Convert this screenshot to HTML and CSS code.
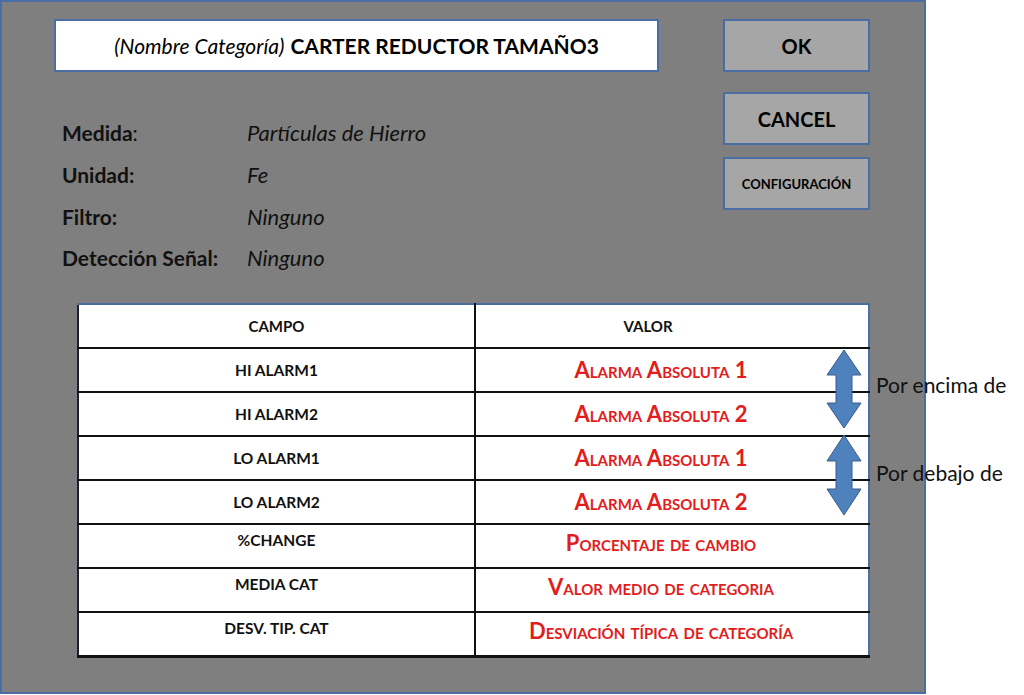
FILE: index.html
```html
<!DOCTYPE html>
<html lang="es">
<head>
<meta charset="UTF-8">
<meta name="viewport" content="width=device-width, initial-scale=1.0">
<title>Categoría - Alarmas</title>
<link rel="stylesheet" href="styles.css">
</head>
<body>

<div class="panel">
    <div class="top">
        <div class="info">
            <div class="title-box">
                <span class="title-label">(Nombre Categoría)</span>
                <span class="title-name">CARTER REDUCTOR TAMAÑO3</span>
            </div>

            <div class="fields">
                <div class="field-label">Medida<span class="thin">:</span></div>
                <div class="field-value">Partículas de Hierro</div>
                <div class="field-label">Unidad:</div>
                <div class="field-value">Fe</div>
                <div class="field-label">Filtro:</div>
                <div class="field-value">Ninguno</div>
                <div class="field-label">Detección Señal:</div>
                <div class="field-value">Ninguno</div>
            </div>
        </div>

        <div class="buttons">
            <button class="btn btn-ok">OK</button>
            <button class="btn btn-cancel">CANCEL</button>
            <button class="btn btn-config">CONFIGURACIÓN</button>
        </div>
    </div>

    <div class="table-section">
        <div class="table-wrap">
            <table class="alarms">
                <tr class="head">
                    <th>CAMPO</th>
                    <th>VALOR</th>
                </tr>
                <tr>
                    <td class="campo">HI ALARM1</td>
                    <td class="valor">Alarma Absoluta 1</td>
                </tr>
                <tr>
                    <td class="campo">HI ALARM2</td>
                    <td class="valor">Alarma Absoluta 2</td>
                </tr>
                <tr>
                    <td class="campo">LO ALARM1</td>
                    <td class="valor">Alarma Absoluta 1</td>
                </tr>
                <tr>
                    <td class="campo">LO ALARM2</td>
                    <td class="valor">Alarma Absoluta 2</td>
                </tr>
                <tr class="raised">
                    <td class="campo">%CHANGE</td>
                    <td class="valor">Porcentaje de cambio</td>
                </tr>
                <tr class="raised">
                    <td class="campo">MEDIA CAT</td>
                    <td class="valor">Valor medio de categoria</td>
                </tr>
                <tr class="raised">
                    <td class="campo">DESV. TIP. CAT</td>
                    <td class="valor">Desviación típica de categoría</td>
                </tr>
            </table>

            <svg class="arrow arrow-hi" viewBox="0 0 36 80" width="36" height="80">
                <polygon points="18,1 35,26 26,26 26,54 35,54 18,79 1,54 10,54 10,26 1,26" />
            </svg>
            <svg class="arrow arrow-lo" viewBox="0 0 36 82" width="36" height="82">
                <polygon points="18,1 35,27 26,27 26,55 35,55 18,81 1,55 10,55 10,27 1,27" />
            </svg>
        </div>

        <div class="notes">
            <div class="note">Por encima de</div>
            <div class="note">Por debajo de</div>
        </div>
    </div>
</div>

</body>
</html>
```

FILE: styles.css
```css
body {
    margin: 0;
    background-color: #fff;
    font-family: Lato, "Open Sans", sans-serif;
    color: #111;
}
.panel {
    box-sizing: border-box;
    width: 926px;
    height: 694px;
    padding-top: 17px;
    background-color: #7f7f7f;
    border: 2px solid #4a6ea4;
}
.top {
    display: flex;
    margin-left: 52px;
}
.info {
    width: 605px;
}
.title-box {
    box-sizing: border-box;
    height: 53px;
    display: flex;
    align-items: center;
    justify-content: center;
    gap: 6px;
    background-color: #fff;
    border: 2px solid #4a6ea4;
    font-size: 21px;
    color: #000;
}
.title-label {
    font-style: italic;
}
.title-name {
    font-weight: bold;
}
.fields {
    display: grid;
    grid-template-columns: 185px auto;
    grid-auto-rows: 41.7px;
    align-items: center;
    margin-top: 40px;
    margin-left: 8px;
}
.field-label {
    font-weight: bold;
    font-size: 21px;
}
.field-label .thin {
    font-weight: normal;
}
.field-value {
    font-style: italic;
    font-size: 22px;
}
.buttons {
    display: flex;
    flex-direction: column;
    margin-left: 64px;
}
.btn {
    box-sizing: border-box;
    width: 147px;
    height: 53px;
    padding: 0;
    background-color: #a6a6a6;
    border: 2px solid #4a6ea4;
    font-family: Lato, "Open Sans", sans-serif;
    font-weight: bold;
    font-size: 20px;
    color: #000;
}
.btn-cancel {
    margin-top: 20px;
}
.btn-config {
    margin-top: 12px;
    font-size: 13px;
}
.table-section {
    display: flex;
    margin-top: 24px;
    margin-left: 75px;
}
.table-wrap {
    position: relative;
}
.alarms {
    width: 793px;
    border-collapse: collapse;
    background-color: #fff;
    border-top: 2px solid #4a6ea4;
    border-right: 2px solid #4a6ea4;
    border-left: 2px solid #1c2030;
    border-bottom: 3px solid #111;
}
.alarms th,
.alarms td {
    height: 42px;
    padding: 0;
    text-align: center;
    border-top: 2px solid #111;
}
.alarms th {
    font-size: 15px;
    border-top: none;
}
.alarms th:first-child,
.alarms td:first-child {
    width: 395px;
    border-right: 2px solid #111;
}
.alarms th:last-child {
    padding-right: 48px;
}
.alarms .valor {
    padding-right: 22px;
}
.campo {
    font-size: 15.5px;
    font-weight: bold;
}
.valor {
    font-size: 22px;
    font-weight: bold;
    font-variant: small-caps;
    color: #e31c1c;
}
.raised td {
    vertical-align: top;
}
.raised .campo {
    height: 36px;
    padding-top: 6px;
}
.raised .valor {
    height: 38px;
    padding-top: 4px;
}
.arrow {
    position: absolute;
    left: 749px;
}
.arrow polygon {
    fill: #4f81bd;
    stroke: #385d8a;
    stroke-width: 1;
}
.arrow-hi {
    top: 46px;
}
.arrow-lo {
    top: 131px;
}
.notes {
    display: flex;
    flex-direction: column;
    margin-left: 6px;
    padding-top: 70px;
    font-size: 21px;
}
.note {
    height: 88px;
    line-height: 24px;
    white-space: nowrap;
}
```
